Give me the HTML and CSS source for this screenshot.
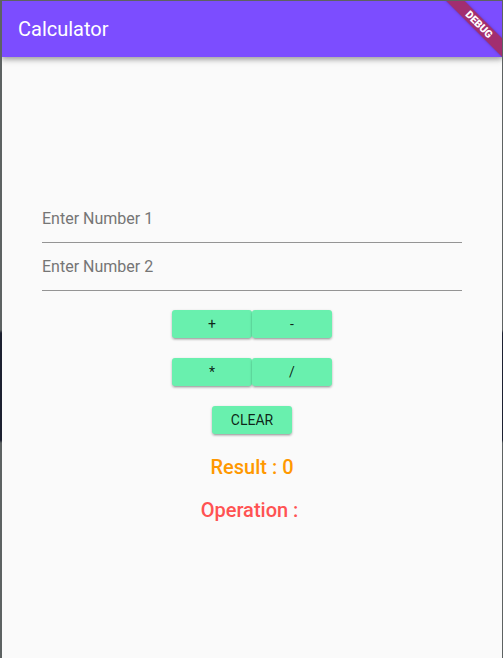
FILE: index.html
```html
<!DOCTYPE html>
<html lang="en">
<head>
<meta charset="utf-8">
<title>Calculator</title>
<link rel="stylesheet" href="styles.css">
</head>
<body>
  <div class="app">
    <header class="appbar">
      <h1 class="title">Calculator</h1>
    </header>
    <div class="banner"><span>DEBUG</span></div>
    <main class="content">
      <div class="field"><span class="hint">Enter Number 1</span></div>
      <div class="field"><span class="hint">Enter Number 2</span></div>
      <div class="buttons">
        <div class="btn-row">
          <button class="btn">+</button>
          <button class="btn">-</button>
        </div>
        <div class="btn-row">
          <button class="btn">*</button>
          <button class="btn">/</button>
        </div>
        <div class="btn-row">
          <button class="btn">CLEAR</button>
        </div>
      </div>
      <p class="result">Result : 0</p>
      <p class="operation">Operation : </p>
    </main>
  </div>
</body>
</html>
```

FILE: styles.css
```css
* { box-sizing: border-box; }

html, body {
  margin: 0;
  height: 100%;
}

body {
  background: linear-gradient(to bottom, #5d6262 0, #5d6262 330px, #1c2030 333px, #1c2030 440px, #5d6262 443px, #5d6262 100%);
  padding: 1px 1px 0 2px;
  font-family: Roboto, "Noto Sans", sans-serif;
  overflow: hidden;
}

.app {
  position: relative;
  height: 100%;
  background: #fafafa;
  overflow: hidden;
  display: flex;
  flex-direction: column;
}

.appbar {
  height: 56px;
  flex: none;
  background: #7c4dff;
  display: flex;
  align-items: center;
  padding: 0 16px;
  box-shadow: 0 2px 4px rgba(0,0,0,0.2), 0 4px 5px rgba(0,0,0,0.12), 0 1px 10px rgba(0,0,0,0.1);
  position: relative;
  z-index: 1;
}

.title {
  margin: 0;
  color: #fff;
  font-size: 20px;
  font-weight: 400;
  line-height: 24px;
}

.banner {
  position: absolute;
  left: 425px;
  top: 17px;
  width: 104px;
  height: 13px;
  transform: rotate(45deg);
  background: rgba(183, 28, 28, 0.63);
  box-shadow: 0 0 3px rgba(0,0,0,0.25);
  display: flex;
  align-items: center;
  justify-content: center;
  z-index: 2;
}

.banner span {
  color: #fff;
  font-size: 10.5px;
  font-weight: 900;
  line-height: 11px;
}

.content {
  padding: 138px 40px 0 40px;
  display: flex;
  flex-direction: column;
}

.field {
  height: 48px;
  padding-top: 14px;
  border-bottom: 1px solid #949494;
}

.hint {
  display: block;
  font-size: 16px;
  line-height: 19px;
  color: #757575;
}

.buttons {
  margin-top: 19px;
  display: flex;
  flex-direction: column;
  align-items: center;
  gap: 20px;
}

.btn-row {
  display: flex;
}

.btn {
  width: 80px;
  height: 28px;
  border: none;
  border-radius: 3px;
  background: #69f0ae;
  color: rgba(0,0,0,0.87);
  font-family: Roboto, "Noto Sans", sans-serif;
  font-size: 14px;
  font-weight: 400;
  padding: 0;
  box-shadow: 0 1px 3px rgba(0,0,0,0.2), 0 2px 2px rgba(0,0,0,0.12), 0 3px 1px -2px rgba(0,0,0,0.1);
}

.result,
.operation {
  margin: 0;
  text-align: center;
  font-size: 20px;
  font-weight: 500;
  line-height: 24px;
  white-space: pre;
}

.result {
  margin-top: 21px;
  color: #ff9800;
}

.operation {
  margin-top: 19px;
  color: #ff5252;
}
```
